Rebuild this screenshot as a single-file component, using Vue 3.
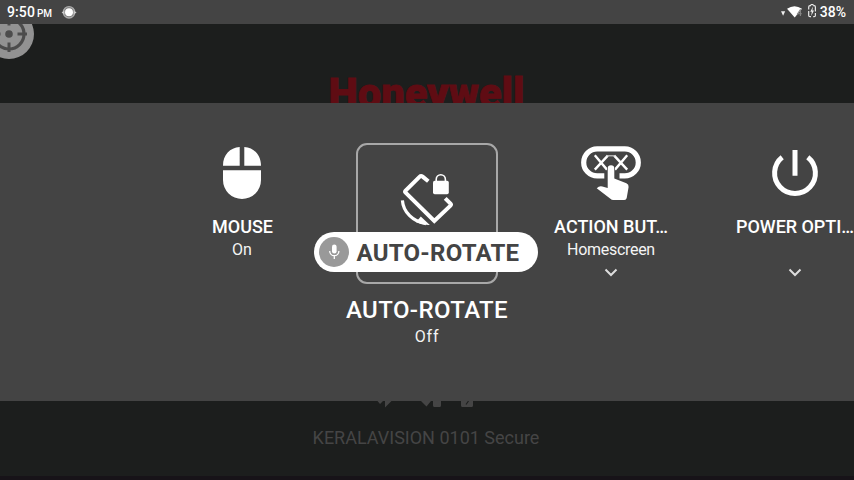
<script setup>
const chevron = 'M1.5 1.5 L7 7 L12.5 1.5'
</script>

<template>
  <div class="screen">
    <header class="status">
      <span class="clock">9:50</span><span class="meridiem">PM</span>
      <svg class="sun" width="16" height="16" viewBox="61 4 16 16">
        <circle cx="69" cy="12.3" r="5.7" fill="#777" stroke="#aaa" stroke-width="1.3" />
        <path d="M61.6 12.6 L64.5 10.5 V14.4Z M76.6 12.6 L73.5 10.5 V14.4Z" fill="#ccc" />
        <circle cx="69" cy="12.3" r="4" fill="#fff" />
      </svg>
      <svg class="signals" width="40" height="18" viewBox="779 3 40 18">
        <path d="M781 11.3 H785.2 L783.1 15.8Z" fill="#eee" />
        <path d="M787 8.7 Q794.5 3.7 802 8.7 L794.7 17.6Z" fill="#fff" />
        <path d="M800.6 9.3 L797.6 13.8 H801.8 M800.4 10 V16" fill="none" stroke="#888" stroke-width="1.1" />
        <path d="M811 5.6 H810 Q808.7 5.6 808.7 7 V9.5 M808.7 11 V15.4 Q808.7 16.6 810 16.6 H811 M813.2 16.6 H814.2 Q815.4 16.6 815.4 15.4 V13 M815.4 11.5 V7 Q815.4 5.6 814.2 5.6 H813.2 M810.6 4.6 H813.5" fill="none" stroke="#e8e8e8" stroke-width="1.2" />
        <path d="M813 6.5 L810.3 11.8 H811.8 L811.2 16 L814 10.6 H812.4Z" fill="#eee" />
      </svg>
      <span class="percent">38%</span>
    </header>

    <section class="backdrop upper">
      <svg class="scene" width="854" height="79" viewBox="0 24 854 79">
        <circle cx="9" cy="34" r="25" fill="#929292" />
        <circle cx="9" cy="34" r="15" fill="none" stroke="#4c4c4c" stroke-width="3.2" />
        <path d="M9 16 V25.5 M9 42.5 V52 M-9 34 H0.5 M17.5 34 H27" stroke="#4c4c4c" stroke-width="3" />
        <circle cx="9" cy="34" r="3.8" fill="#4c4c4c" />
        <text class="brand" x="328.5" y="108" textLength="196" lengthAdjust="spacingAndGlyphs">Honeywell</text>
      </svg>
    </section>

    <main class="panel">
      <article class="option">
        <svg class="icon" width="64" height="60" viewBox="210 143 64 60">
          <path d="M239.7 147 V165.7 H223 C223 155 230 147.6 239.7 147Z M244.3 147 V165.7 H261 C261 155 254 147.6 244.3 147Z M223 170.3 H261 V180 A19 19 0 0 1 223 180Z" fill="#fff" />
        </svg>
        <h2 class="title mouse">MOUSE</h2>
        <p class="value">On</p>
      </article>

      <article class="option selected">
        <div class="frame">
          <svg width="64" height="60" viewBox="395 170 64 60">
            <path d="M428.3 181.3 L422.6 176.6 Q421 175.3 419.5 176.8 L405.6 190.6 Q404.6 191.7 405.6 192.7 L434.3 221 L450.5 205.6 Q451.4 204.7 450.5 203.7 L445.2 198.3" fill="none" stroke="#fff" stroke-width="4" />
            <path d="M402.4 200.3 C403.2 212 413 221.8 426 223.6" fill="none" stroke="#fff" stroke-width="3.2" />
            <path d="M420.8 216.6 L429.8 225 Q423 225.4 416 222.3Z" fill="#fff" />
            <rect x="433" y="180.8" width="15.8" height="13.4" rx="1.7" fill="#fff" />
            <path d="M436.2 182 V179.4 A4.6 4.6 0 0 1 445.4 179.4 V182" fill="none" stroke="#fff" stroke-width="1.6" />
          </svg>
          <div class="voice">
            <span class="mic">
              <svg width="12" height="18" viewBox="328 243.5 12 18">
                <rect x="332" y="245" width="4.6" height="9" rx="2.3" fill="#fff" />
                <path d="M329.7 251.4 A4.6 4.8 0 0 0 338.9 251.4 M334.3 256.3 V259.6" fill="none" stroke="#fff" stroke-width="1.3" />
              </svg>
            </span>
            <span class="command">AUTO-ROTATE</span>
          </div>
        </div>
        <h2 class="title">AUTO-ROTATE</h2>
        <p class="value">Off</p>
      </article>

      <article class="option">
        <svg class="icon" width="64" height="60" viewBox="579 143 64 60">
          <path d="M604.3 175.9 H597.2 A13.5 13.5 0 0 1 597.2 148.9 H624.8 A13.5 13.5 0 0 1 624.8 175.9 H619.5" fill="none" stroke="#fff" stroke-width="5.2" />
          <path d="M594.8 155.3 L607 169.6 M594.8 169.6 L607.8 155.6 M614.2 155.6 L627.2 169.6 M627.2 155.3 L615 169.6" fill="none" stroke="#fff" stroke-width="2.4" />
          <path d="M606.5 155.8 H615.5" stroke="#ccc" stroke-width="1.2" />
          <path d="M607.7 168.5 A3.3 3.3 0 0 1 614.3 168.5 V178.4 L626.4 183.2 Q628.9 184.3 628.6 187 L626.7 198 Q626.3 200 624.3 200 H613.3 Q611.6 200 610.4 198.8 L596.7 188.3 Q599.3 185.6 602.3 186.5 L607.7 188Z" fill="#fff" stroke="#444" stroke-width="1.4" paint-order="stroke" />
        </svg>
        <h2 class="title action">ACTION BUT…</h2>
        <p class="value long">Homescreen</p>
        <svg class="chevron" width="14" height="9" viewBox="0 0 14 9"><path :d="chevron" /></svg>
      </article>

      <article class="option">
        <svg class="icon" width="64" height="60" viewBox="763 143 64 60">
          <path d="M782.2 157.2 A20.4 20.4 0 1 0 807.8 157.2 M795 150 V175.7" fill="none" stroke="#fff" stroke-width="5" />
        </svg>
        <h2 class="title power">POWER OPTI…</h2>
        <p class="value"></p>
        <svg class="chevron" width="14" height="9" viewBox="0 0 14 9"><path :d="chevron" /></svg>
      </article>
    </main>

    <footer class="backdrop lower">
      <svg class="remnants" width="110" height="10" viewBox="372 401 110 10">
        <path d="M377.5 401 L380 404 L383 401Z M385 401 V407.5 L391.5 401Z M421 401 L426.5 406.5 L431 401Z M433 401 H441 V405.5 Q441 407 439.5 407 H434.5 Q433 407 433 405.5Z M461 401 H473 V405.5 Q473 407 471.5 407 H462.5 Q461 407 461 405.5Z" fill="#454545" />
        <path d="M468.5 401 L466 404.5" stroke="#1c1e1d" stroke-width="1.1" />
      </svg>
      <p class="network">KERALAVISION 0101 Secure</p>
    </footer>
  </div>
</template>

<style>
body {
  margin: 0;
  background: #1b1d1c;
}
</style>

<style scoped>
.screen {
  width: 854px;
  height: 480px;
  overflow: hidden;
  display: flex;
  flex-direction: column;
  background: #1c1e1d;
  color: #fff;
  font-family: Roboto, sans-serif;
}
.status {
  height: 24px;
  flex: none;
  display: flex;
  align-items: center;
  box-sizing: border-box;
  padding: 0 8px 0 7px;
  background: #444;
  font-weight: 500;
}
.clock {
  font-size: 14px;
  letter-spacing: 0.1px;
}
.meridiem {
  margin: 3px 0 0 2px;
  font-size: 10px;
}
.sun {
  margin-left: 9px;
}
.signals {
  margin-left: auto;
}
.percent {
  margin-left: 1px;
  font-size: 14px;
}
.backdrop {
  background: #1c1e1d;
}
.upper {
  height: 79px;
  flex: none;
}
.scene {
  display: block;
}
.brand {
  font: 900 42px Roboto, sans-serif;
  fill: #5f0c13;
  stroke: #5f0c13;
  stroke-width: 0.8px;
}
.panel {
  height: 298px;
  flex: none;
  box-sizing: border-box;
  padding: 40px 0 0 150px;
  display: grid;
  grid-template-columns: 184px 185px 184px 184px;
  background: #444;
}
.option {
  display: flex;
  flex-direction: column;
  align-items: center;
}
.icon {
  display: block;
  flex: none;
}
.title {
  margin: 13px 0 0;
  font-size: 18px;
  line-height: 22px;
  font-weight: 500;
  white-space: nowrap;
}
.mouse {
  padding-left: 1px;
}
.power {
  letter-spacing: -0.05px;
}
.value {
  margin: 2px 0 0;
  height: 20px;
  font-size: 16px;
  line-height: 20px;
  color: #f4f4f4;
}
.long {
  letter-spacing: -0.3px;
}
.chevron {
  margin-top: 8px;
  fill: none;
  stroke: #ddd;
  stroke-width: 2;
}
.frame {
  position: relative;
  width: 142px;
  height: 141px;
  flex: none;
  box-sizing: border-box;
  border: 2px solid #a8a8a8;
  border-radius: 11px;
  display: flex;
  justify-content: center;
  padding-top: 25px;
}
.voice {
  position: absolute;
  left: -44px;
  top: 87px;
  width: 224px;
  height: 40px;
  box-sizing: border-box;
  padding-left: 5px;
  border-radius: 20px;
  display: flex;
  align-items: center;
  background: #fff;
  color: #444;
}
.mic {
  width: 30px;
  height: 30px;
  border-radius: 50%;
  display: flex;
  align-items: center;
  justify-content: center;
  background: #999;
}
.command {
  margin-left: 8px;
  padding-top: 2px;
  font-size: 24px;
  font-weight: 700;
  line-height: 38px;
  letter-spacing: 0.25px;
  white-space: nowrap;
}
.selected .title {
  margin-top: 12px;
  padding-left: 1px;
  font-size: 24px;
  line-height: 28px;
  letter-spacing: 0.4px;
}
.selected .value {
  margin-top: 3px;
  padding-left: 1px;
  letter-spacing: 0.8px;
}
.lower {
  flex: 1;
  display: flex;
  flex-direction: column;
  align-items: center;
  border-bottom: 4px solid #171318;
}
.remnants {
  display: block;
}
.network {
  margin: 16px 0 0;
  padding-right: 2px;
  font-size: 18px;
  line-height: 22px;
  color: #454545;
}
</style>
